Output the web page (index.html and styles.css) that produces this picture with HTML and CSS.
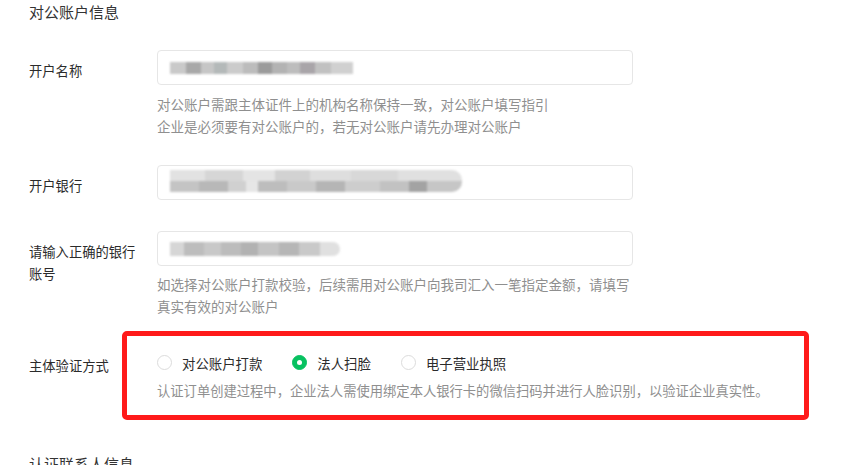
FILE: index.html
```html
<!DOCTYPE html>
<html lang="zh">
<head>
<meta charset="utf-8"/>
<meta content="width=device-width, initial-scale=1.0" name="viewport"/>
<title>对公账户信息</title>
<link rel="stylesheet" href="styles.css">
</head>
<body>
<div class="page">
  <!-- 对公账户信息 -->
  <h2 class="section-title">对公账户信息</h2>

  <div class="form-item first">
    <div class="form-label">开户名称</div>
    <div class="form-control">
      <div class="input"><span class="mosaic mosaic-name"></span></div>
      <p class="hint">对公账户需跟主体证件上的机构名称保持一致，对公账户填写指引<br/>企业是必须要有对公账户的，若无对公账户请先办理对公账户</p>
    </div>
  </div>

  <div class="form-item">
    <div class="form-label">开户银行</div>
    <div class="form-control">
      <div class="input"><span class="mosaic mosaic-bank"><i class="mosaic-top"></i><i class="mosaic-bottom"></i></span></div>
    </div>
  </div>

  <div class="form-item account">
    <div class="form-label">请输入正确的银行账号</div>
    <div class="form-control">
      <div class="input"><span class="mosaic mosaic-account"></span></div>
      <p class="hint tight">如选择对公账户打款校验，后续需用对公账户向我司汇入一笔指定金额，请填写真实有效的对公账户</p>
    </div>
  </div>

  <!-- 主体验证方式 -->
  <div class="form-item marked">
    <div class="form-label">主体验证方式</div>
    <div class="form-control">
      <div class="radio-group">
        <label class="radio"><span class="radio-dot"></span>对公账户打款</label>
        <label class="radio checked"><span class="radio-dot"></span>法人扫脸</label>
        <label class="radio"><span class="radio-dot"></span>电子营业执照</label>
      </div>
      <p class="desc">认证订单创建过程中，企业法人需使用绑定本人银行卡的微信扫码并进行人脸识别，以验证企业真实性。</p>
    </div>
  </div>

  <h2 class="section-title next">认证联系人信息</h2>
</div>
</body>
</html>
```

FILE: styles.css
```css
body {
  margin: 0;
  background: #fff;
  color: #333;
  font-family: "Noto Sans CJK SC", "Noto Sans", sans-serif;
  overflow: hidden;
}

.page {
  padding-left: 29px;
}

.section-title {
  margin: 0;
  font-size: 15px;
  font-weight: normal;
  line-height: 24px;
  color: #333;
}

.section-title.next {
  margin-top: 50px;
}

.form-item {
  display: flex;
  width: 604px;
  margin-top: 28px;
}

.form-item.first {
  margin-top: 26px;
}

.form-item.account {
  margin-top: 31px;
}

.form-label {
  width: 110px;
  padding-right: 18px;
  flex-shrink: 0;
  padding-top: 10px;
  font-size: 13.3px;
  line-height: 22px;
  color: #2b2b2b;
}

.form-control {
  flex: 1;
}

.input {
  height: 35px;
  box-sizing: border-box;
  border: 1px solid #e6e6e6;
  border-radius: 4px;
  padding-left: 12px;
  display: flex;
  align-items: center;
}

.hint {
  margin: 8px 0 0;
  font-size: 13.5px;
  line-height: 22px;
  color: #8f8f8f;
}

.hint.tight {
  margin-top: 7px;
}

/* 打码的输入内容 */
.mosaic {
  display: block;
  filter: blur(1.2px);
}

.mosaic-name {
  width: 183px;
  height: 12px;
  background: linear-gradient(90deg,
    #c9c9c9 0 9%, #a8a8a8 9% 17%, #c6c6c6 17% 24%, #b4b9b9 24% 31%,
    #cbcbcb 31% 40%, #bcbcbc 40% 48%, #9b9b9b 48% 56%, #b3b3b3 56% 64%,
    #bdbdbd 64% 71%, #a9a5a9 71% 79%, #c1c1c1 79% 88%, #d0d0d0 88% 100%);
}

.mosaic-bank {
  width: 292px;
  height: 22px;
  border-radius: 0 10px 10px 0;
  overflow: hidden;
  margin-top: -3px;
}

.mosaic-bank i {
  display: block;
  height: 11px;
}

.mosaic-top {
  background: linear-gradient(90deg,
    #e2e2e2 0 12%, #d6d6d6 12% 25%, #e4e4e4 25% 36%, #d2d2d2 36% 48%,
    #dedede 48% 62%, #d8d8d8 62% 78%, #e0e0e0 78% 100%);
}

.mosaic-bottom {
  background: linear-gradient(90deg,
    #c4c4c4 0 10%, #b8b8b8 10% 20%, #d0d0d0 20% 26%, #e6e6e6 26% 30%,
    #bdbdbd 30% 40%, #c9c9c9 40% 50%, #b5b5b5 50% 60%, #cdcdcd 60% 72%,
    #c2c2c2 72% 82%, #a3a3a3 82% 88%, #c6c6c6 88% 100%);
}

.mosaic-account {
  width: 170px;
  height: 14px;
  border-radius: 0 7px 7px 0;
  background: linear-gradient(90deg,
    #d6d6d6 0 8%, #bdbdbd 8% 20%, #c8c8c8 20% 30%, #bcbcbc 30% 42%,
    #b2b2b2 42% 52%, #c4c4c4 52% 64%, #b6b6b6 64% 76%, #c9c9c9 76% 88%,
    #e0e0e0 88% 100%);
}

/* 单选 */
.radio-group {
  height: 35px;
  display: flex;
  align-items: center;
}

.radio {
  display: flex;
  align-items: center;
  margin-right: 30px;
  font-size: 13.4px;
  color: #2b2b2b;
  cursor: pointer;
}

.radio-dot {
  width: 15px;
  height: 15px;
  box-sizing: border-box;
  border: 1px solid #dcdcdc;
  border-radius: 50%;
  margin-right: 10px;
  display: flex;
  align-items: center;
  justify-content: center;
}

.radio.checked .radio-dot {
  background: #07c160;
  border-color: #07c160;
}

.radio.checked .radio-dot::after {
  content: "";
  width: 5px;
  height: 5px;
  border-radius: 50%;
  background: #fff;
}

.desc {
  margin: 0;
  font-size: 13.3px;
  line-height: 22px;
  color: #8f8f8f;
  white-space: nowrap;
}

/* 红框标注 */
.form-item.marked {
  position: relative;
}

.form-item.marked::after {
  content: "";
  position: absolute;
  top: -14px;
  bottom: -18px;
  left: 93px;
  right: -176px;
  border: 5px solid #ff1a1a;
  border-radius: 5px;
  pointer-events: none;
}
```
